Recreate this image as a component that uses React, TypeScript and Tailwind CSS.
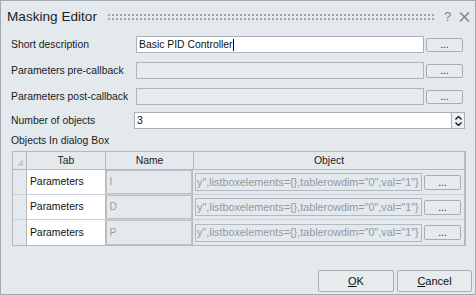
import { Fragment } from 'react';

const rows = [
    { tab: 'Parameters', name: 'I' },
    { tab: 'Parameters', name: 'D' },
    { tab: 'Parameters', name: 'P' },
];

// only the tail of the object string shows in the box
const objectText = 'y",listboxelements={},tablerowdim="0",val="1"}';

function DotsButton({ className = '' }: { className?: string }) {
    return (
        <button className={`flex items-end justify-center pb-[1px] border border-[#a7aeb4] rounded-[2px] bg-[#e6ebee] text-[10px] leading-none text-[#222] ${className}`}>
            ...
        </button>
    );
}

function Gripper() {
    return (
        <svg className="h-[6px] w-[328px] ml-[11px]" aria-hidden>
            <defs>
                <pattern id="grip" width="4" height="4" patternUnits="userSpaceOnUse">
                    <rect width="2" height="2" fill="#a2a9ae" />
                </pattern>
            </defs>
            <rect width="100%" height="100%" fill="url(#grip)" />
        </svg>
    );
}

export default function App() {
    return (
        <div className="w-[476px] h-[295px] border border-[#a3aaaf] bg-[#e4e9ed] flex flex-col overflow-hidden font-['Liberation_Sans',Arial,sans-serif] text-[10.4px] text-[#1b1b1b]">
            {/* Title bar */}
            <div className="h-[31px] flex items-center pl-[6px] shrink-0">
                <span className="text-[13.6px] leading-none text-[#1e1e1e]">Masking Editor</span>
                <Gripper />
                <span className="ml-[8px] text-[13px] leading-none text-[#80878c]">?</span>
                <svg className="ml-[8px] w-[11px] h-[10px]" viewBox="0 0 11 10" aria-hidden>
                    <path d="M1 0.5 L10 9.5 M10 0.5 L1 9.5" stroke="#848b90" strokeWidth="1.6" />
                </svg>
            </div>

            {/* Form */}
            <div className="px-[10px] pt-[4px] flex flex-col">
                <div className="flex items-center h-[17px]">
                    <span className="w-[125px]">Short description</span>
                    <div className="w-[288px] h-[17px] border border-[#a9afb4] bg-white flex items-center pl-[2px] text-[#111]">
                        Basic PID Controller<span className="inline-block w-px h-[12px] bg-black" />
                    </div>
                    <DotsButton className="ml-[2px] w-[37px] h-[14px]" />
                </div>
                <div className="flex items-center h-[17px] mt-[9px]">
                    <span className="w-[125px]">Parameters pre-callback</span>
                    <div className="w-[288px] h-[17px] border border-[#aeb4b9] bg-[#e6ebee]" />
                    <DotsButton className="ml-[2px] w-[37px] h-[14px]" />
                </div>
                <div className="flex items-center h-[17px] mt-[9px]">
                    <span className="w-[125px]">Parameters post-callback</span>
                    <div className="w-[288px] h-[17px] border border-[#aeb4b9] bg-[#e6ebee]" />
                    <DotsButton className="ml-[2px] w-[37px] h-[14px]" />
                </div>
                <div className="flex items-center h-[17px] mt-[7px]">
                    <span className="w-[123px]">Number of objects</span>
                    <div className="w-[318px] h-[17px] border border-[#a9afb4] bg-white flex items-center pl-[2px] text-[#111]">3</div>
                    <div className="w-[13px] h-[17px] border border-l-0 border-[#a9afb4] bg-[#eef1f3] flex flex-col items-center justify-center gap-[2px]">
                        <svg width="7" height="4" viewBox="0 0 7 4" aria-hidden><path d="M0.5 3.5 L3.5 0.5 L6.5 3.5" stroke="#1a1a1a" strokeWidth="1.4" fill="none" /></svg>
                        <svg width="7" height="4" viewBox="0 0 7 4" aria-hidden><path d="M0.5 0.5 L3.5 3.5 L6.5 0.5" stroke="#1a1a1a" strokeWidth="1.4" fill="none" /></svg>
                    </div>
                </div>
                <div className="h-[14px] mt-[5px] flex items-center">Objects In dialog Box</div>

                {/* Table */}
                <div className="mt-[3px] ml-px w-[454px] border border-r-2 border-[#b2b9bf] flex flex-col">
                    <div className="h-[18px] flex border-b border-[#b2b9bf]">
                        <div className="w-[14px] border-r border-[#b2b9bf] relative">
                            <svg className="absolute left-[4px] top-[7px]" width="6" height="7" viewBox="0 0 6 7" aria-hidden>
                                <polygon points="6,0 6,7 0,7" fill="#c3c9ce" />
                            </svg>
                        </div>
                        <div className="w-[79px] border-r border-[#b2b9bf] flex items-center justify-center">Tab</div>
                        <div className="w-[88px] border-r border-[#b2b9bf] flex items-center justify-center">Name</div>
                        <div className="flex-1 flex items-center justify-center">Object</div>
                    </div>
                    {rows.map((r, i) => (
                        <Fragment key={i}>
                            <div className={`h-[25px] flex ${i < rows.length - 1 ? 'border-b border-[#c9cfd4]' : ''}`}>
                                <div className="w-[14px] border-r border-[#b2b9bf]" />
                                <div className="w-[79px] border-r border-[#b2b9bf] bg-white flex items-center pl-[3px] text-[#111]">{r.tab}</div>
                                <div className="w-[88px] border-r border-[#b2b9bf] flex">
                                    <div className="flex-1 border border-[#bdc3c8] flex items-center pl-[3px] text-[#9aa0a5]">{r.name}</div>
                                </div>
                                <div className="flex-1 flex items-center pl-[2px] pr-[3px]">
                                    <div className="w-[227px] h-[18px] border border-[#b3b9be] flex items-center overflow-hidden whitespace-nowrap pl-px text-[10.8px] text-[#9299a0]">
                                        {objectText}
                                    </div>
                                    <DotsButton className="ml-[2px] w-[37px] h-[15px]" />
                                </div>
                            </div>
                        </Fragment>
                    ))}
                </div>
            </div>

            {/* Footer buttons */}
            <div className="mt-auto flex justify-end gap-[3px] pr-[3px] pb-[2px]">
                <button className="w-[76px] h-[22px] border border-[#a7aeb4] rounded-[2px] bg-[#e6ebee] text-[11px] text-[#111]">
                    <span className="underline underline-offset-1">O</span>K
                </button>
                <button className="w-[75px] h-[22px] border border-[#a7aeb4] rounded-[2px] bg-[#e6ebee] text-[11px] text-[#111]">
                    <span className="underline underline-offset-1">C</span>ancel
                </button>
            </div>
        </div>
    );
}
